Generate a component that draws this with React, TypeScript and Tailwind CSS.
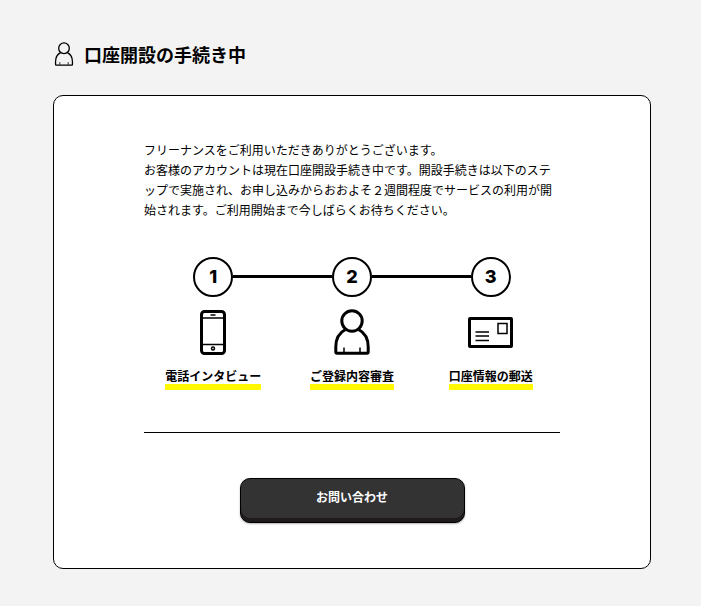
import type { ReactNode } from "react";

function PersonIcon({ className, strokeWidth }: { className: string; strokeWidth: number }) {
  return (
    <svg viewBox="0 0 36 46" className={className} fill="none" stroke="currentColor" aria-hidden="true">
      <g strokeWidth={strokeWidth} strokeLinejoin="round">
        <circle cx="18" cy="12" r="10.2" />
        <path d="M11.5 20.5C5.500 23.5 1.8 30 1.8 38v5c0 .9.4 1.3 1.3 1.3h29.8c.9 0 1.3-.4 1.3-1.3v-5c0-8-3.7-14.5-9.7-17.5" />
      </g>
      <path d="M10 38.5v5M26 38.5v5" strokeWidth="1.5" />
    </svg>
  );
}

function PhoneIcon() {
  return (
    <svg viewBox="0 0 26 45" className="h-[45px] w-[26px]" fill="none" stroke="currentColor" aria-hidden="true">
      <rect x="1.5" y="1.5" width="23" height="42" rx="3" strokeWidth="3" />
      <path d="M2 8h22M2 34.5h22" strokeWidth="1.5" />
      <path d="M10.5 5h5" strokeWidth="1.5" />
      <circle cx="13" cy="38.5" r="1.5" strokeWidth="1.5" />
    </svg>
  );
}

function LetterIcon() {
  return (
    <svg viewBox="0 0 45 31" className="h-[31px] w-[45px]" fill="none" stroke="currentColor" aria-hidden="true">
      <rect x="1.5" y="1.5" width="42" height="28" rx="0.5" strokeWidth="3" />
      <rect x="30" y="6.5" width="9" height="10" strokeWidth="1.5" />
      <path d="M7.5 15h13.500M7.5 19h13.500M7.5 23.5h13.500" strokeWidth="1.5" />
    </svg>
  );
}

const steps: { label: string; icon: ReactNode }[] = [
  { label: "電話インタビュー", icon: <PhoneIcon /> },
  { label: "ご登録内容審査", icon: <PersonIcon className="h-[46px] w-9" strokeWidth={3} /> },
  { label: "口座情報の郵送", icon: <LetterIcon /> },
];

function StepList() {
  return (
    <ol className="mt-[37px] grid grid-cols-3">
      {steps.map((step, i) => (
        <li key={step.label} className="flex flex-col items-center">
          <div className="flex w-full items-center">
            <span className={i > 0 ? "mb-px h-[3px] flex-1 bg-black" : "flex-1"} />
            <span className="flex size-10 items-center justify-center rounded-full border-2 border-black font-['Inter','Liberation_Sans',sans-serif] text-lg font-extrabold">
              {i + 1}
            </span>
            <span className={i < steps.length - 1 ? "mb-px h-[3px] flex-1 bg-black" : "flex-1"} />
          </div>
          <div className="mt-3 flex h-[46px] items-center">{step.icon}</div>
          <p className="mt-[13px] border-b-6 border-[#fff800] text-xs leading-4 font-bold">{step.label}</p>
        </li>
      ))}
    </ol>
  );
}

export default function App() {
  return (
    <main
      lang="ja"
      className="min-h-screen bg-[#f3f3f3] pt-10 pr-[50px] pb-9 pl-[53px] font-['Noto_Sans_CJK_JP',sans-serif] text-black"
    >
      <h1 className="flex items-center gap-[9px] text-lg leading-7 font-bold">
        <PersonIcon className="h-6 w-[22px]" strokeWidth={2.5} />
        口座開設の手続き中
      </h1>

      <section className="mt-[27px] rounded-[10px] border border-black bg-white px-[90px] pt-11 pb-[45px]">
        <p className="text-xs leading-5 break-all">
          フリーナンスをご利用いただきありがとうございます。
          <br />
          お客様のアカウントは現在口座開設手続き中です。開設手続きは以下のステップで実施され、お申し込みからおおよそ２週間程度でサービスの利用が開始されます。ご利用開始まで今しばらくお待ちください。
        </p>

        <StepList />

        <hr className="mt-[42px] border-black" />

        <div className="mt-[45px] flex justify-center">
          <button
            type="button"
            className="h-[45px] w-[225px] rounded-[10px] border border-black bg-[#333] pb-2 text-xs font-bold text-white shadow-[inset_0_-4px_0_#1f1b1b,0_1px_2px_rgba(0,0,0,0.3)]"
          >
            お問い合わせ
          </button>
        </div>
      </section>
    </main>
  );
}
